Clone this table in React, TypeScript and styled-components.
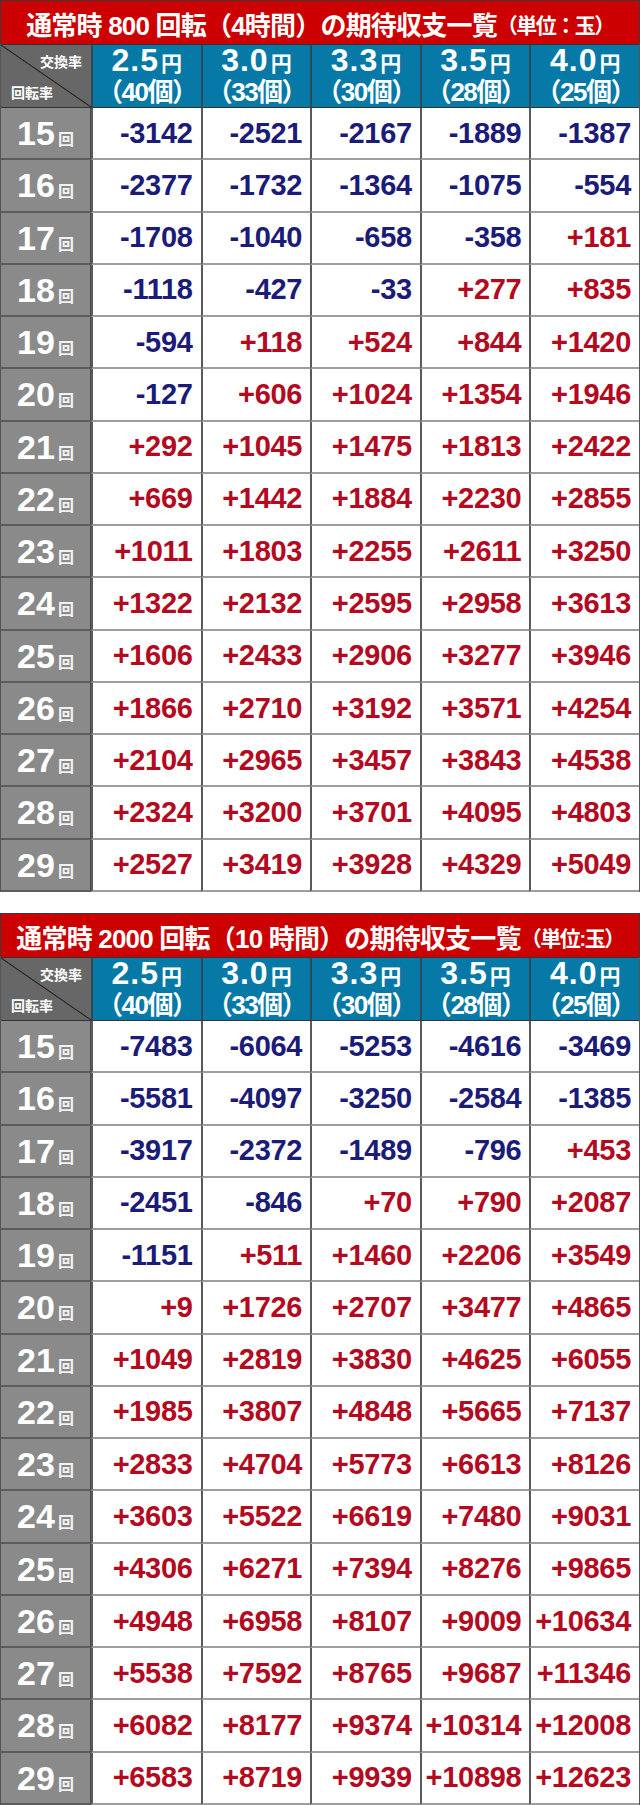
import React from "react";
import styled, { createGlobalStyle } from "styled-components";

const GlobalStyle = createGlobalStyle`
  html, body {
    margin: 0;
    padding: 0;
    background: #ffffff;
  }
  body {
    font-family: "Liberation Sans", "Noto Sans CJK JP", sans-serif;
  }
`;

const FONT = `"Liberation Sans", "Noto Sans CJK JP", sans-serif`;

type Table = {
  title: string;
  unit: string;
  rows: number[][];
};

const RATES = [
  { yen: "2.5", balls: "40" },
  { yen: "3.0", balls: "33" },
  { yen: "3.3", balls: "30" },
  { yen: "3.5", balls: "28" },
  { yen: "4.0", balls: "25" },
];

const TABLES: Table[] = [
  {
    title: "通常時 800 回転（4時間）の期待収支一覧",
    unit: "（単位：玉）",
    rows: [
      [-3142, -2521, -2167, -1889, -1387],
      [-2377, -1732, -1364, -1075, -554],
      [-1708, -1040, -658, -358, 181],
      [-1118, -427, -33, 277, 835],
      [-594, 118, 524, 844, 1420],
      [-127, 606, 1024, 1354, 1946],
      [292, 1045, 1475, 1813, 2422],
      [669, 1442, 1884, 2230, 2855],
      [1011, 1803, 2255, 2611, 3250],
      [1322, 2132, 2595, 2958, 3613],
      [1606, 2433, 2906, 3277, 3946],
      [1866, 2710, 3192, 3571, 4254],
      [2104, 2965, 3457, 3843, 4538],
      [2324, 3200, 3701, 4095, 4803],
      [2527, 3419, 3928, 4329, 5049],
    ],
  },
  {
    title: "通常時 2000 回転（10 時間）の期待収支一覧",
    unit: "（単位:玉）",
    rows: [
      [-7483, -6064, -5253, -4616, -3469],
      [-5581, -4097, -3250, -2584, -1385],
      [-3917, -2372, -1489, -796, 453],
      [-2451, -846, 70, 790, 2087],
      [-1151, 511, 1460, 2206, 3549],
      [9, 1726, 2707, 3477, 4865],
      [1049, 2819, 3830, 4625, 6055],
      [1985, 3807, 4848, 5665, 7137],
      [2833, 4704, 5773, 6613, 8126],
      [3603, 5522, 6619, 7480, 9031],
      [4306, 6271, 7394, 8276, 9865],
      [4948, 6958, 8107, 9009, 10634],
      [5538, 7592, 8765, 9687, 11346],
      [6082, 8177, 9374, 10314, 12008],
      [6583, 8719, 9939, 10898, 12623],
    ],
  },
];

const Page = styled.div`
  width: 640px;
  display: flex;
  flex-direction: column;
  gap: 21px;
`;

const Block = styled.section`
  display: flex;
  flex-direction: column;
  height: 892px;
`;

const Title = styled.h2`
  margin: 0;
  height: 44px;
  box-sizing: border-box;
  border: 1px solid #3a3a3a;
  border-bottom: none;
  background: #cc0000;
  color: #ffffff;
  display: flex;
  align-items: center;
  justify-content: center;
  padding-top: 1px;
  font-family: ${FONT};
  font-size: 26px;
  font-weight: 700;
  letter-spacing: -0.8px;
  white-space: nowrap;
`;

const Unit = styled.span`
  font-size: 21px;
  letter-spacing: -1.5px;
  margin-top: 2px;
`;

const Grid = styled.div`
  flex: 1;
  display: grid;
  grid-template-columns: 90px repeat(5, 1fr);
  grid-template-rows: 64px repeat(15, 1fr);
  border-left: 1px solid #555;
  border-right: 1px solid #555;
`;

const Corner = styled.div`
  position: relative;
  box-sizing: border-box;
  border-top: 1px solid #333;
  border-bottom: 1px solid #333;
  background: linear-gradient(
    to top right,
    #676767 calc(50% - 1px),
    #1e1e1e 50%,
    #676767 calc(50% + 1px)
  );
  color: #ffffff;
  font-family: ${FONT};
  font-weight: 700;
  font-size: 14px;
`;

const CornerLabel = styled.span<{ $pos: "top" | "bottom" }>`
  position: absolute;
  ${(p) => (p.$pos === "top" ? "top: 6px; right: 9px;" : "bottom: 5px; left: 10px;")}
`;

const RateCell = styled.div`
  box-sizing: border-box;
  border-top: 1px solid #333;
  border-left: 2px solid #2b4a5a;
  border-bottom: 1px solid #333;
  background: #0679a7;
  color: #ffffff;
  font-family: ${FONT};
  font-weight: 700;
  display: flex;
  flex-direction: column;
  align-items: center;
  justify-content: center;
  padding-bottom: 2px;
`;

const Yen = styled.div`
  font-size: 32px;
  line-height: 31px;
  letter-spacing: 1px;
  span {
    font-size: 21px;
    margin-left: 2px;
    letter-spacing: 0;
  }
`;

const Balls = styled.div`
  font-size: 26px;
  line-height: 27px;
  letter-spacing: -1.5px;
`;

const LabelCell = styled.div`
  box-sizing: border-box;
  border-bottom: 2px solid #5c5c5c;
  border-right: 1px solid #4a4a4a;
  background: #8a8a8a;
  color: #ffffff;
  display: flex;
  align-items: baseline;
  justify-content: center;
  padding-top: 6px;
  font-family: ${FONT};
  font-weight: 700;
`;

const LabelNum = styled.span`
  font-size: 34px;
  letter-spacing: 0;
`;

const LabelUnit = styled.span`
  font-size: 16px;
  margin-left: 3px;
  color: #f2f2f2;
`;

const ValueCell = styled.div<{ $positive: boolean }>`
  box-sizing: border-box;
  border-left: 2px solid #5a5a5a;
  border-bottom: 2px solid #9e9e9e;
  background: #ffffff;
  color: ${(p) => (p.$positive ? "#b30a1f" : "#1b1b78")};
  display: flex;
  align-items: center;
  justify-content: flex-end;
  padding-right: 8px;
  font-family: ${FONT};
  font-size: 29px;
  font-weight: 700;
  letter-spacing: -0.3px;
`;

const formatValue = (v: number) => (v >= 0 ? `+${v}` : `${v}`);

const ExpectTable = ({ table }: { table: Table }) => (
  <Block>
    <Title>
      {table.title}
      <Unit>{table.unit}</Unit>
    </Title>
    <Grid>
      <Corner>
        <CornerLabel $pos="top">交換率</CornerLabel>
        <CornerLabel $pos="bottom">回転率</CornerLabel>
      </Corner>
      {RATES.map((r) => (
        <RateCell key={r.yen}>
          <Yen>
            {r.yen}
            <span>円</span>
          </Yen>
          <Balls>（{r.balls}個）</Balls>
        </RateCell>
      ))}
      {table.rows.map((row, i) => (
        <React.Fragment key={i}>
          <LabelCell>
            <LabelNum>{15 + i}</LabelNum>
            <LabelUnit>回</LabelUnit>
          </LabelCell>
          {row.map((v, j) => (
            <ValueCell key={j} $positive={v >= 0}>
              {formatValue(v)}
            </ValueCell>
          ))}
        </React.Fragment>
      ))}
    </Grid>
  </Block>
);

export default function App() {
  return (
    <>
      <GlobalStyle />
      <Page>
        {TABLES.map((t, i) => (
          <ExpectTable key={i} table={t} />
        ))}
      </Page>
    </>
  );
}
